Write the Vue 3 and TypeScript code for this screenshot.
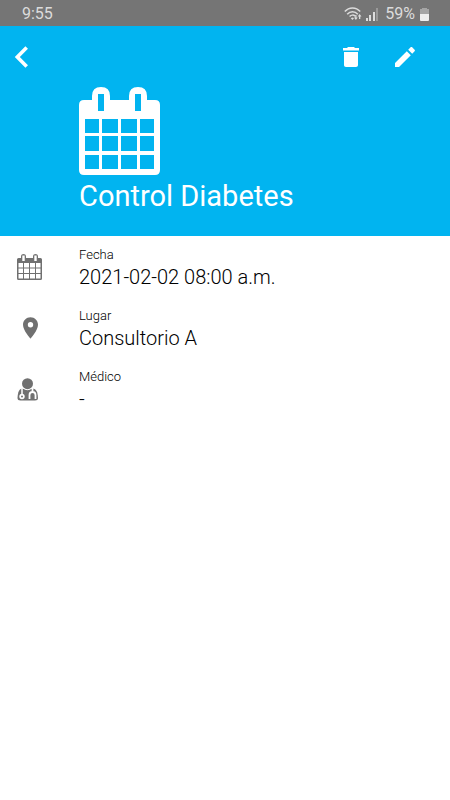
<script setup lang="ts">
interface Detail {
  icon: 'calendar' | 'place' | 'doctor'
  label: string
  value: string
}

const title = 'Control Diabetes'
const details: Detail[] = [
  { icon: 'calendar', label: 'Fecha', value: '2021-02-02 08:00 a.m.' },
  { icon: 'place', label: 'Lugar', value: 'Consultorio A' },
  { icon: 'doctor', label: 'Médico', value: '-' },
]
</script>

<template>
  <div class="screen">
    <div class="status">
      <span class="clock">9:55</span>
      <svg class="wifi" viewBox="0 0 18 14" aria-hidden="true">
        <g fill="none" stroke="currentColor" stroke-width="1.5">
          <path d="M.8 4.6C5-.2 12-.2 16.2 4.6" />
          <path d="M3.2 7.2c3-3.4 7.6-3.4 10.6 0" />
          <path d="M5.6 9.6c1.7-1.9 4-1.9 5.6-.4" />
        </g>
        <path d="M6.8 11.2q1.7-1.5 3.2 0L8.400 13z" fill="currentColor" />
        <path d="M10 10.500h1.200V8h1.300v2.500h1.200L11.900 13zM13.700 9.500L15.600 7l1.900 2.500h-1.200V12H15V9.500z" fill="currentColor" />
      </svg>
      <svg class="signal" viewBox="0 0 12 13" aria-hidden="true">
        <path d="M0 10h2v3H0zM3 7h2v6H3zM7 4h2v9H7z" fill="currentColor" />
        <path d="M10 0h2v13h-2z" fill="#999" />
      </svg>
      <span class="percent">59%</span>
      <svg class="battery" viewBox="0 0 9 13" aria-hidden="true">
        <path d="M2 0h5v1h2v5H0V1h2z" fill="#a5a5a5" />
        <path d="M0 6h9v6q0 1-1 1H1q-1 0-1-1z" fill="#eee" />
      </svg>
    </div>

    <header class="header">
      <nav class="toolbar">
        <button type="button" class="action" aria-label="Volver">
          <svg viewBox="0 0 24 24"><path d="M18.700 2.500L9.300 12l9.400 9.500" fill="none" stroke="currentColor" stroke-width="3.600" /></svg>
        </button>
        <span class="spacer"></span>
        <button type="button" class="action" aria-label="Eliminar">
          <svg viewBox="0 0 24 24"><path d="M5 20c0 1.200.8 2 2 2h10c1.200 0 2-.8 2-2V7H5zM20 3h-4l-1-1H9L8 3H4v2.500h16z" fill="currentColor" /></svg>
        </button>
        <button type="button" class="action" aria-label="Editar">
          <svg viewBox="0 0 24 24"><path d="M2 18v4h4L17.800 10.200l-4-4zM21.600 6.300c.5-.5.5-1.100 0-1.600l-2.400-2.400c-.5-.5-1.100-.5-1.600 0L15.200 4.700l4 4z" fill="currentColor" /></svg>
        </button>
      </nav>
      <div class="hero">
        <svg class="hero-icon" viewBox="0 0 81 88" aria-hidden="true">
          <path
            fill="currentColor"
            fill-rule="evenodd"
            d="M5 13h8V9Q13 0 22 0t9 9v4h19V9q0-9 9-9t9 9v4h8q5 0 5 5v65q0 5-5 5H5q-5 0-5-5V18q0-5 5-5z
               M19 7v17h6V7zM56 7v17h6V7z
               M6 32v14h14V32zM23 32v14h16V32zM42 32v14h16V32zM61 32v14h14V32z
               M6 49v15h14V49zM23 49v15h16V49zM42 49v15h16V49zM61 49v15h14V49z
               M6 68v14h14V68zM23 68v14h16V68zM42 68v14h16V68zM61 68v14h14V68z"
          />
        </svg>
        <h1>{{ title }}</h1>
      </div>
    </header>

    <dl class="details">
      <div v-for="item in details" :key="item.label" class="row">
        <svg v-if="item.icon === 'calendar'" class="calendar" viewBox="0 0 25 26" aria-hidden="true">
          <path
            fill="currentColor"
            fill-rule="evenodd"
            d="M1.500 4H4V2.500Q4 0 6.500 0T9 2.500V4h7V2.500Q16 0 18.500 0T21 2.500V4h2.500Q25 4 25 5.500v19q0 1.500-1.500 1.500h-22Q0 26 0 24.500v-19Q0 4 1.500 4z
               M5.300 1.500v5.500h2.400V1.500zM17.300 1.500v5.500h2.400V1.500z
               M1.500 9v4.500H6V9zM7 9v4.500h5V9zM13 9v4.500h5V9zM19 9v4.500h4.500V9z
               M1.500 14.500v4.500H6v-4.500zM7 14.500v4.500h5v-4.500zM13 14.500v4.500h5v-4.500zM19 14.500v4.500h4.500v-4.500z
               M1.500 20v4.500H6V20zM7 20v4.500h5V20zM13 20v4.500h5V20zM19 20v4.500h4.500V20z"
          />
        </svg>
        <svg v-else-if="item.icon === 'place'" class="place" viewBox="5 2 14 20" aria-hidden="true">
          <path fill="currentColor" d="M12 2C8.130 2 5 5.130 5 9c0 5.250 7 13 7 13s7-7.750 7-13c0-3.870-3.130-7-7-7zm0 9.500a2.500 2.500 0 1 1 0-5 2.500 2.500 0 0 1 0 5z" />
        </svg>
        <svg v-else class="doctor" viewBox="0 0 21 23" aria-hidden="true">
          <path fill="currentColor" d="M5 10.500h11q3 .5 4.200 4 .8 3 .8 5.500 0 2.500-3 2.500H3.500Q.5 22.500.5 20q0-2.500.8-5.500 1-3.500 3.700-4z" />
          <circle cx="10.500" cy="5.700" r="6.500" fill="#fff" />
          <circle cx="10.500" cy="5.700" r="5.500" fill="currentColor" />
          <g fill="none" stroke="#fff">
            <path d="M5 10v7" stroke-width="1.500" />
            <path d="M15.500 10v4M12.500 21v-4q0-3 3-3t3 3v4" stroke-width="1.800" />
          </g>
          <circle cx="5" cy="18.500" r="2.700" fill="#fff" />
          <circle cx="5" cy="18.500" r="1" fill="currentColor" />
        </svg>
        <dt>{{ item.label }}</dt>
        <dd>{{ item.value }}</dd>
      </div>
    </dl>
  </div>
</template>

<style>
body {
  margin: 0;
  background: #fff;
}
</style>

<style scoped>
.screen {
  min-height: 100vh;
  background: #fff;
  font-family: Roboto, "Liberation Sans", sans-serif;
}

.status {
  display: flex;
  align-items: center;
  height: 26px;
  box-sizing: border-box;
  padding: 2px 21px 0 22px;
  background: #757575;
  color: #dcdcdc;
  font-size: 16px;
  line-height: 24px;
}

.clock {
  flex: 1;
}

.wifi {
  width: 18px;
  height: 14px;
  margin-right: 4px;
}

.signal {
  width: 12px;
  height: 13px;
  margin-right: 7px;
}

.percent {
  margin-right: 5px;
}

.battery {
  width: 9px;
  height: 13px;
}

.header {
  padding-bottom: 20px;
  background: #01b4f0;
  color: #fff;
}

.toolbar {
  display: flex;
  align-items: center;
  gap: 14px;
  padding: 11px 25px 10px 0;
}

.spacer {
  flex: 1;
}

.action {
  display: flex;
  align-items: center;
  justify-content: center;
  width: 40px;
  height: 40px;
  padding: 0;
  border: 0;
  background: none;
  color: inherit;
  cursor: pointer;
}

.action svg {
  width: 24px;
  height: 24px;
}

.hero {
  padding: 0 20px 0 79px;
}

.hero-icon {
  display: block;
  width: 81px;
  height: 88px;
}

h1 {
  margin: 0;
  padding-top: 1px;
  font-size: 29px;
  font-weight: 400;
  line-height: 40px;
}

.details {
  display: grid;
  gap: 16px;
  margin: 0;
  padding: 10px 17px;
}

.row {
  display: grid;
  grid-template-columns: 62px 1fr;
  grid-template-rows: 18px 27px;
  align-items: center;
}

.row svg {
  grid-row: 1 / 3;
  margin-bottom: 3px;
  color: #707070;
}

.calendar {
  width: 25px;
  height: 26px;
}

.place {
  width: 15px;
  height: 22px;
  margin-left: 6px;
}

.doctor {
  width: 21px;
  height: 23px;
}

dt {
  color: #000;
  font-size: 13px;
  font-weight: 300;
  line-height: 18px;
}

dd {
  margin: 0;
  color: #000;
  font-size: 20px;
  font-weight: 300;
  line-height: 27px;
}
</style>
